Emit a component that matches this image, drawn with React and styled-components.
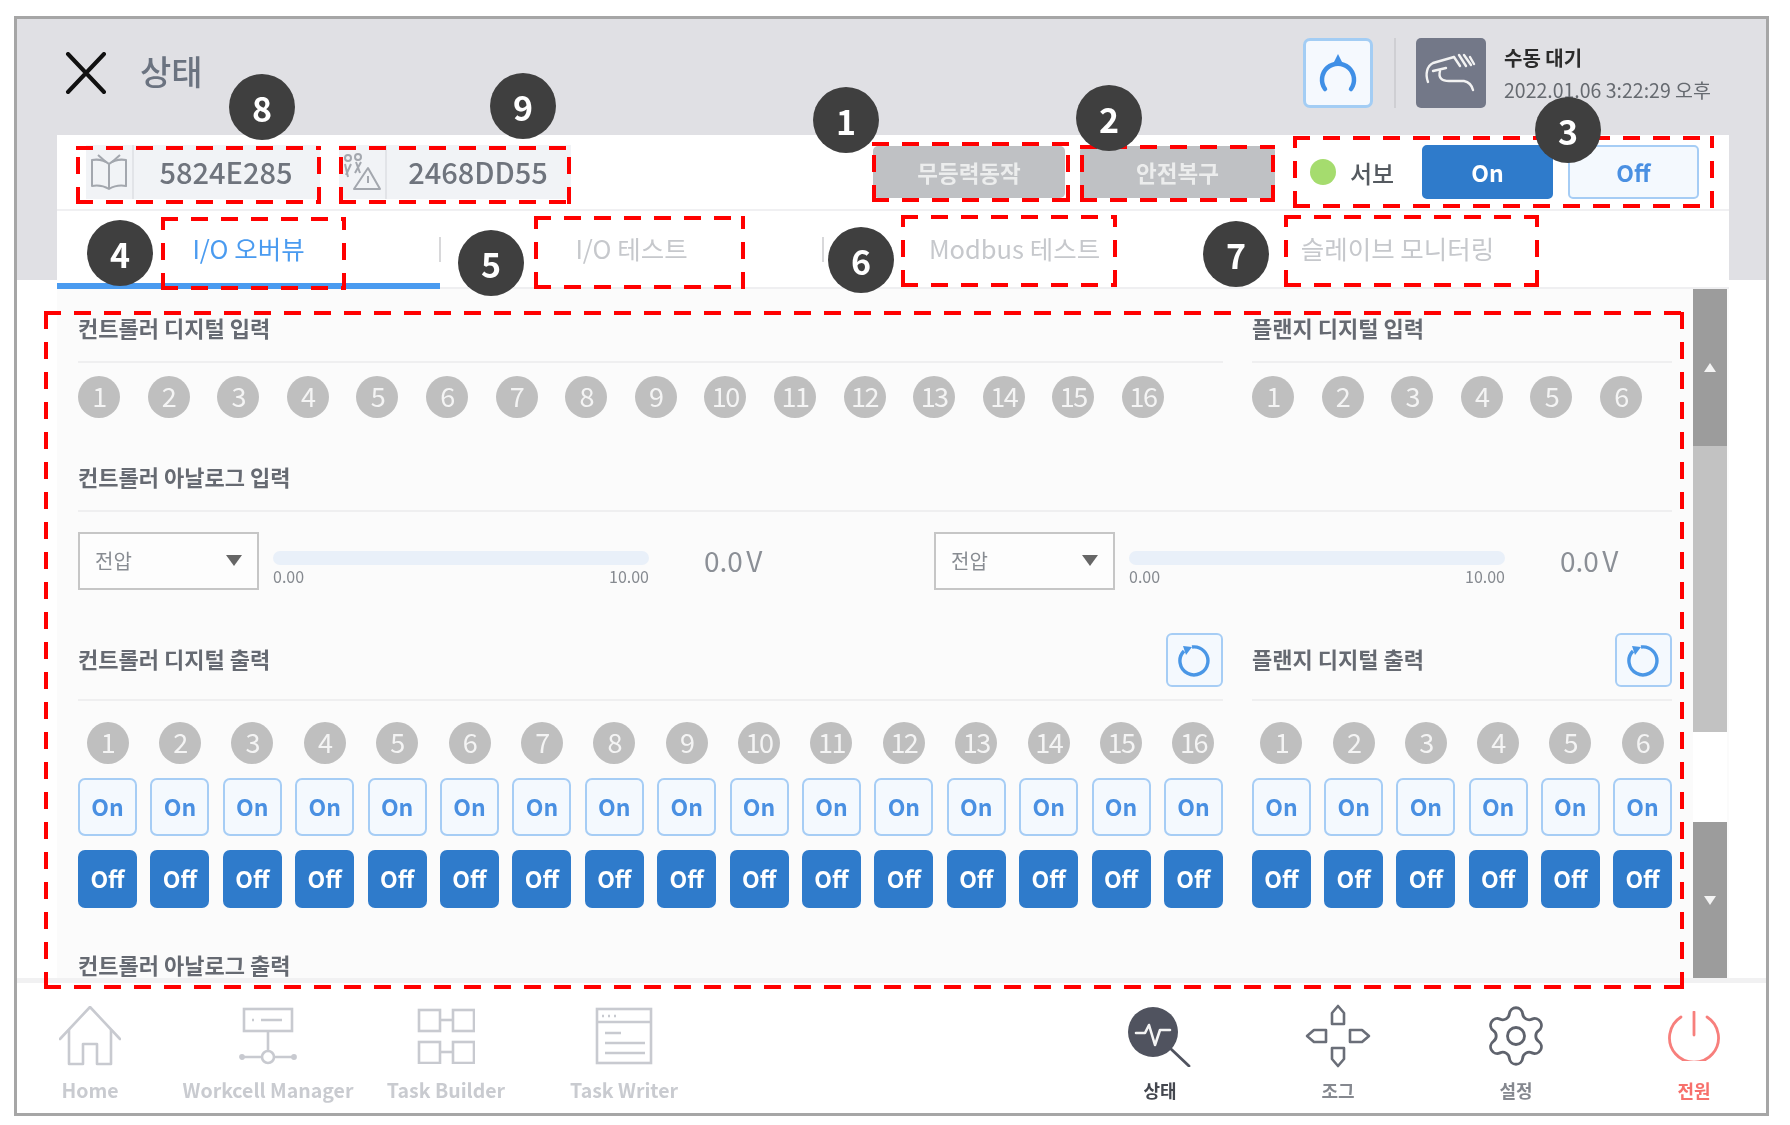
import React from "react";
import styled, { createGlobalStyle } from "styled-components";
import { Settings } from "lucide-react";

const GlobalStyle = createGlobalStyle`
  html, body { margin: 0; padding: 0; background: #fff; }
  body { font-family: "Noto Sans CJK KR", "Noto Sans", sans-serif; }
`;

const Page = styled.div`
  position: relative;
  width: 1790px;
  height: 1125px;
  box-sizing: border-box;
  padding: 16px 0 0 14px;
  overflow: hidden;
  filter: blur(0.7px);
`;

const Frame = styled.div`
  width: 1755px;
  height: 1100px;
  box-sizing: border-box;
  border: 3px solid #a6a6a6;
  display: flex;
  flex-direction: column;
  overflow: hidden;
  background: linear-gradient(#e0e0e4 0 261px, #fff 261px);
`;

/* header */
const TopBar = styled.header`
  height: 116px;
  flex: none;
  box-sizing: border-box;
  padding: 19px 52px 0 48px;
  display: flex;
  align-items: flex-start;
`;

const TopLeft = styled.div`
  height: 70px;
  display: flex;
  align-items: center;
  gap: 33px;
`;

const PageTitle = styled.h1`
  margin: 0 0 6px;
  font-size: 34px;
  font-weight: 500;
  color: #6b7380;
`;

const TopRight = styled.div`
  margin-left: auto;
  height: 70px;
  display: flex;
  align-items: center;
`;

const HomeButton = styled.div`
  width: 70px;
  height: 70px;
  box-sizing: border-box;
  border: 3px solid #a3cdf4;
  border-radius: 7px;
  background: #f5f9fe;
  display: flex;
  align-items: center;
  justify-content: center;
`;

const VLine = styled.div`
  width: 2px;
  height: 70px;
  margin: 0 20px 0 21px;
  background: #cfcfd3;
`;

const ModeIcon = styled.div`
  width: 70px;
  height: 70px;
  border-radius: 5px;
  background: #737888;
  display: flex;
  align-items: center;
  justify-content: center;
`;

const Status = styled.div`
  width: 210px;
  margin-left: 18px;
  padding-top: 2px;
  display: flex;
  flex-direction: column;
  gap: 8px;
`;

const StatusMode = styled.div`
  font-size: 20px;
  line-height: 24px;
  font-weight: 700;
  color: #2b2b2b;
`;

const StatusTime = styled.div`
  font-size: 19.5px;
  line-height: 24px;
  color: #666a70;
  white-space: nowrap;
`;

/* panel */
const Panel = styled.main`
  height: 843px;
  flex: none;
  margin: 0 37px 0 40px;
  background: #fff;
  display: flex;
  flex-direction: column;
`;

const Toolbar = styled.div`
  height: 76px;
  flex: none;
  box-sizing: border-box;
  padding: 0 28px 0 29px;
  border-bottom: 2px solid #f0f0f2;
  display: flex;
  align-items: center;
`;

const Chip = styled.div`
  width: ${(p) => p.$w}px;
  height: 54px;
  margin-right: 19px;
  background: #f1f3f6;
  display: flex;
  align-items: stretch;
`;

const ChipIcon = styled.div`
  width: 46px;
  flex: none;
  border-right: 2px solid #e2e4e8;
  display: flex;
  align-items: center;
  justify-content: center;
`;

const ChipText = styled.div`
  flex: 1;
  display: flex;
  align-items: center;
  justify-content: center;
  padding: 0 2px 2px 0;
  font-size: 29px;
  font-weight: 500;
  color: #6f747d;
`;

const GreyButton = styled.div`
  width: ${(p) => p.$w}px;
  height: 52px;
  margin-left: ${(p) => p.$ml}px;
  border-radius: 5px;
  background: #bfc1c4;
  color: #eceded;
  font-size: 22.5px;
  font-weight: 700;
  display: flex;
  align-items: center;
  justify-content: center;
`;

const ServoDot = styled.div`
  width: 26px;
  height: 26px;
  margin-left: 35px;
  border-radius: 50%;
  background: #a5dc6e;
`;

const ServoLabel = styled.div`
  width: 46px;
  margin: 0 26px 0 14px;
  font-size: 24px;
  font-weight: 500;
  color: #555a60;
  white-space: nowrap;
`;

const ServoButton = styled.div`
  width: 131px;
  height: 54px;
  margin-left: ${(p) => p.$ml}px;
  box-sizing: border-box;
  border-radius: 5px;
  border: 2px solid ${(p) => (p.$on ? "#2f7bcb" : "#a6cdf5")};
  background: ${(p) => (p.$on ? "#2f7bcb" : "#f4f9fe")};
  color: ${(p) => (p.$on ? "#fff" : "#4a90e2")};
  font-size: 23px;
  font-weight: 700;
  display: flex;
  align-items: center;
  justify-content: center;
`;

const Tabs = styled.div`
  height: 78px;
  flex: none;
  box-sizing: border-box;
  border-bottom: 2px solid #efeff1;
  display: grid;
  grid-template-columns: repeat(4, 383px);
`;

const Tab = styled.div`
  position: relative;
  height: 78px;
  box-sizing: border-box;
  border-bottom: 6px solid ${(p) => (p.$active ? "#4a9bf0" : "transparent")};
  display: flex;
  align-items: center;
  justify-content: center;
  font-size: 25.5px;
  color: ${(p) => (p.$active ? "#4a9bf0" : "#c6c8cc")};

  ${(p) =>
    p.$sep &&
    `&::after {
      content: "";
      position: absolute;
      right: -1px;
      top: 26px;
      width: 2px;
      height: 25px;
      background: #d8d8da;
    }`}
`;

const Body = styled.div`
  flex: 1;
  min-height: 0;
  display: flex;
  background: #fbfbfb;
  overflow: hidden;
`;

const Content = styled.div`
  width: 1636px;
  flex: none;
  box-sizing: border-box;
  padding: 25px 21px 0;
`;

const TwoCols = styled.div`
  display: grid;
  grid-template-columns: 1145px 420px;
  column-gap: 29px;
`;

const SectionHead = styled.div`
  display: flex;
  align-items: center;
  justify-content: space-between;
  padding-bottom: ${(p) => p.$pb}px;
  border-bottom: 2px solid #efeff0;
`;

const SectionTitle = styled.h2`
  margin: -2px 0 2px;
  font-size: 22px;
  line-height: ${(p) => (p.$tight ? 20 : 30)}px;
  font-weight: 700;
  color: #666a72;
  white-space: nowrap;
`;

const CircleRow = styled.div`
  margin: 13px 0 1px;
  display: flex;
  gap: 27.6px;
`;

const Circle = styled.div`
  width: 42px;
  height: 42px;
  flex: none;
  box-sizing: border-box;
  padding-bottom: 3px;
  border-radius: 50%;
  background: #bfbfbf;
  color: #f4f4f4;
  font-size: 27px;
  letter-spacing: -1.5px;
  display: flex;
  align-items: center;
  justify-content: center;
`;

const SectionGap = styled.div`
  height: ${(p) => p.$h}px;
`;

const AnalogRow = styled.div`
  margin: 20px 0 1px;
  display: flex;
`;

const AnalogItem = styled.div`
  width: 856px;
  display: flex;
  align-items: flex-start;
  flex: none;
`;

const Select = styled.div`
  width: 181px;
  height: 58px;
  flex: none;
  box-sizing: border-box;
  border: 2px solid #c6c6c6;
  background: #fdfdfd;
  padding: 0 15px 2px;
  display: flex;
  align-items: center;
  justify-content: space-between;
  font-size: 20px;
  color: #888c92;
`;

const Caret = styled.span`
  width: 0;
  height: 0;
  border-left: 8px solid transparent;
  border-right: 8px solid transparent;
  border-top: 11px solid #666;
`;

const Slider = styled.div`
  width: 376px;
  margin: 19px 0 0 14px;
  flex: none;
`;

const Track = styled.div`
  height: 14px;
  border-radius: 7px;
  background: #e9f0f9;
`;

const SliderLabels = styled.div`
  margin-top: 1px;
  display: flex;
  justify-content: space-between;
  font-size: 16px;
  line-height: 20px;
  color: #85898f;
`;

const AnalogValue = styled.div`
  margin-left: 55px;
  font-size: 28px;
  line-height: 56px;
  word-spacing: -3px;
  color: #8b8f96;
  white-space: nowrap;
`;

const RefreshButton = styled.div`
  width: 57px;
  height: 54px;
  box-sizing: border-box;
  border: 2px solid #a6cdf5;
  border-radius: 6px;
  background: #f4f9fe;
  display: flex;
  align-items: center;
  justify-content: center;
`;

const OutputGrid = styled.div`
  margin-top: 21px;
  display: grid;
  grid-template-columns: repeat(${(p) => p.$n}, 1fr);
  column-gap: 13.3px;
  row-gap: 14px;
  justify-items: center;
`;

const IoButton = styled.div`
  width: 100%;
  height: 58px;
  box-sizing: border-box;
  padding-bottom: 2px;
  border-radius: 7px;
  border: 2px solid ${(p) => (p.$on ? "#2f7bcb" : "#a6cdf5")};
  background: ${(p) => (p.$on ? "#2f7bcb" : "#f4f9fe")};
  color: ${(p) => (p.$on ? "#fff" : "#4a90e2")};
  font-size: 23px;
  font-weight: 700;
  display: flex;
  align-items: center;
  justify-content: center;
`;

const ScrollBar = styled.div`
  width: 34px;
  flex: none;
  display: flex;
  flex-direction: column;
`;

const ScrollEnd = styled.div`
  height: ${(p) => p.$h}px;
  flex: none;
  background: #9c9c9c;
  display: flex;
  align-items: center;
  justify-content: center;

  &::after {
    content: "";
    border-left: 6px solid transparent;
    border-right: 6px solid transparent;
    ${(p) => (p.$up ? "border-bottom" : "border-top")}: 9px solid #f4f4f4;
  }
`;

const ScrollThumb = styled.div`
  height: ${(p) => p.$h}px;
  flex: none;
  background: ${(p) => p.$bg};
`;

/* footer */
const Footer = styled.footer`
  flex: 1;
  min-height: 0;
  box-sizing: border-box;
  border-top: 5px solid #f1f1f2;
  background: #fff;
  padding: 20px 2px 0 3px;
  display: flex;
  justify-content: space-between;
`;

const FooterGroup = styled.nav`
  display: flex;
  gap: 38px;
`;

const FooterItem = styled.div`
  width: 140px;
  display: flex;
  flex-direction: column;
  align-items: center;
  color: ${(p) => p.$color};
  font-size: ${(p) => (p.$latin ? 19.5 : 18)}px;
  font-weight: 700;
  white-space: nowrap;
`;

const FooterIcon = styled.div`
  height: 66px;
  display: flex;
  align-items: center;
  justify-content: center;
`;

const FooterLabel = styled.div`
  margin-top: 7px;
  line-height: 28px;
`;

/* callouts lying over the screen */
const DashBox = styled.div`
  position: absolute;
  left: ${(p) => p.$x}px;
  top: ${(p) => p.$y}px;
  width: ${(p) => p.$w}px;
  height: ${(p) => p.$h}px;
  background:
    repeating-linear-gradient(90deg, #f00 0 17px, transparent 17px 30px) left top / 100% 4px no-repeat,
    repeating-linear-gradient(90deg, #f00 0 17px, transparent 17px 30px) left bottom / 100% 4px no-repeat,
    repeating-linear-gradient(0deg, #f00 0 17px, transparent 17px 30px) left top / 4px 100% no-repeat,
    repeating-linear-gradient(0deg, #f00 0 17px, transparent 17px 30px) right top / 4px 100% no-repeat;
`;

const Badge = styled.div`
  position: absolute;
  left: ${(p) => p.$x - 33}px;
  top: ${(p) => p.$y - 33}px;
  width: 66px;
  height: 66px;
  border-radius: 50%;
  background: #3f3f3f;
  color: #fff;
  font-size: 34px;
  font-weight: 700;
  display: flex;
  align-items: center;
  justify-content: center;
`;

const dashBoxes = [
  { x: 76, y: 146, w: 245, h: 58 },
  { x: 339, y: 146, w: 232, h: 58 },
  { x: 872, y: 142, w: 198, h: 60 },
  { x: 1080, y: 145, w: 195, h: 57 },
  { x: 1293, y: 136, w: 421, h: 72 },
  { x: 161, y: 217, w: 185, h: 73 },
  { x: 534, y: 216, w: 211, h: 73 },
  { x: 901, y: 215, w: 216, h: 72 },
  { x: 1284, y: 215, w: 255, h: 72 },
  { x: 44, y: 311, w: 1640, h: 678 },
];

const badges = [
  { n: 8, x: 262, y: 107 },
  { n: 9, x: 523, y: 106 },
  { n: 1, x: 846, y: 120 },
  { n: 2, x: 1109, y: 118 },
  { n: 3, x: 1568, y: 130 },
  { n: 4, x: 120, y: 253 },
  { n: 5, x: 491, y: 263 },
  { n: 6, x: 861, y: 260 },
  { n: 7, x: 1236, y: 254 },
];

const range = (n) => Array.from({ length: n }, (_, i) => i + 1);

const CloseIcon = () => (
  <svg width="42" height="42" viewBox="0 0 42 42" fill="none" stroke="#111" strokeWidth="4" strokeLinecap="round">
    <path d="M3 2 L39 40 M39 2 L3 40" />
  </svg>
);

const ArcIcon = () => (
  <svg width="42" height="42" viewBox="0 0 42 42" fill="none">
    <path d="M8 37 A16 16 0 1 1 34 37" stroke="#3f8fe6" strokeWidth="4.5" strokeLinecap="round" />
    <path d="M21 2 L16 12 H26 Z" fill="#3f8fe6" />
  </svg>
);

const HandIcon = () => (
  <svg width="70" height="70" viewBox="0 0 70 70" fill="none" stroke="#f2f2f2" strokeWidth="2.4" strokeLinecap="round" strokeLinejoin="round">
    <path d="M12 44 C9 36 11 28 17 25 L38 19" />
    <path d="M38 19 L44 28 M43 17 L50 28 M48 17 L55 27 M54 19 L58 26" />
    <path d="M17 33 L30 30" />
    <path d="M24 33 C22 40 26 43 33 43 L48 43 C53 44 56 48 57 52" />
  </svg>
);

const BookIcon = () => (
  <svg width="38" height="36" viewBox="0 0 38 36" fill="none" stroke="#a3a7ae" strokeWidth="2" strokeLinejoin="round">
    <path d="M19 10 C14 6 8 5 2 6 V32 C8 31 14 32 19 35 C24 32 30 31 36 32 V6 C30 5 24 6 19 10 V35" />
    <path d="M8 1 L16 8 M30 1 L22 8" />
  </svg>
);

const WarnIcon = () => (
  <svg width="40" height="38" viewBox="0 0 40 38" fill="none" stroke="#a3a7ae" strokeWidth="2" strokeLinejoin="round">
    <circle cx="6" cy="5" r="3" />
    <circle cx="16" cy="4" r="3" />
    <path d="M3 11 L6 24 M9 11 L4 22 M14 9 L18 20 M19 9 L13 20" />
    <path d="M26 15 L38 36 H12 Z" />
    <path d="M26 23 V30" />
  </svg>
);

const RefreshIcon = () => (
  <svg width="34" height="34" viewBox="0 0 34 34" fill="none">
    <path d="M14 4 A14 14 0 1 1 6 8" stroke="#4a97e6" strokeWidth="3.4" />
    <path d="M5 3 L14 4 L8 12 Z" fill="#4a97e6" />
  </svg>
);

const GREY = "#c8cad0";

const HomeNav = () => (
  <svg width="62" height="60" viewBox="0 0 62 60" fill="none" stroke={GREY} strokeWidth="2.6" strokeLinejoin="round" strokeLinecap="round">
    <path d="M1 33 L31 1 L61 33" />
    <path d="M10 24 V58 H24 V38 H38 V58 H52 V24" />
  </svg>
);

const WorkcellNav = () => (
  <svg width="58" height="58" viewBox="0 0 58 58" fill="none" stroke={GREY} strokeWidth="2.6">
    <rect x="5" y="2" width="48" height="22" />
    <path d="M13 13 H15 M22 13 H43" />
    <path d="M29 24 V44" />
    <circle cx="29" cy="50" r="6" />
    <path d="M3 50 H23 M35 50 H55" />
    <circle cx="3" cy="50" r="1.6" fill={GREY} />
    <circle cx="55" cy="50" r="1.6" fill={GREY} />
  </svg>
);

const TaskBuilderNav = () => (
  <svg width="58" height="56" viewBox="0 0 58 56" fill="none" stroke={GREY} strokeWidth="2.6">
    <rect x="2" y="2" width="21" height="21" />
    <rect x="36" y="2" width="21" height="21" />
    <path d="M23 12 H36" />
    <rect x="2" y="34" width="21" height="21" />
    <rect x="36" y="34" width="21" height="21" />
    <path d="M23 44 H36" />
  </svg>
);

const TaskWriterNav = () => (
  <svg width="58" height="58" viewBox="0 0 58 58" fill="none" stroke={GREY} strokeWidth="2.6">
    <rect x="2" y="2" width="54" height="54" />
    <path d="M2 15 H56" />
    <path d="M7 9 H9 M13 9 H15 M19 9 H21" />
    <path d="M10 26 H26 M10 36 H50 M10 46 H50" />
  </svg>
);

const StatusNav = () => (
  <svg width="66" height="62" viewBox="0 0 66 62" fill="none">
    <circle cx="26" cy="27" r="25" fill="#50535f" />
    <path d="M44 44 L62 61" stroke="#50535f" strokeWidth="2.8" strokeLinecap="round" />
    <path d="M9 28 H18 L22 20 L28 40 L33 25 H43" stroke="#f4f4f4" strokeWidth="2.6" strokeLinejoin="round" strokeLinecap="round" />
  </svg>
);

const JogNav = () => (
  <svg width="66" height="64" viewBox="0 0 66 64" fill="none" stroke="#6a6e78" strokeWidth="2.6" strokeLinejoin="round">
    <path d="M27 20 V9 L33 2 L39 9 V20 Z" />
    <path d="M27 44 V55 L33 62 L39 55 V44 Z" />
    <path d="M21 26 H9 L2 32 L9 38 H21 Z" />
    <path d="M45 26 H57 L64 32 L57 38 H45 Z" />
  </svg>
);

const PowerNav = () => (
  <svg width="54" height="50" viewBox="0 0 54 50" fill="none" stroke="#f77f7c" strokeWidth="2.8" strokeLinecap="round">
    <path d="M27 1 V24" />
    <path d="M14 6 A24.5 24.5 0 1 0 40 6" />
  </svg>
);

const Circles = ({ n }) => (
  <CircleRow>
    {range(n).map((i) => (
      <Circle key={i}>{i}</Circle>
    ))}
  </CircleRow>
);

const Output = ({ n }) => (
  <OutputGrid $n={n}>
    {range(n).map((i) => (
      <Circle key={i}>{i}</Circle>
    ))}
    {range(n).map((i) => (
      <IoButton key={i}>On</IoButton>
    ))}
    {range(n).map((i) => (
      <IoButton key={i} $on>
        Off
      </IoButton>
    ))}
  </OutputGrid>
);

const Analog = () => (
  <AnalogItem>
    <Select>
      전압
      <Caret />
    </Select>
    <Slider>
      <Track />
      <SliderLabels>
        <span>0.00</span>
        <span>10.00</span>
      </SliderLabels>
    </Slider>
    <AnalogValue>0.0 V</AnalogValue>
  </AnalogItem>
);

const navLeft = [
  ["Home", HomeNav],
  ["Workcell Manager", WorkcellNav],
  ["Task Builder", TaskBuilderNav],
  ["Task Writer", TaskWriterNav],
];

const navRight = [
  ["상태", StatusNav, "#44474f"],
  ["조그", JogNav, "#85888f"],
  ["설정", null, "#85888f"],
  ["전원", PowerNav, "#f7706c"],
];

export default function App() {
  return (
    <>
      <GlobalStyle />
      <Page>
        <Frame>
          <TopBar>
            <TopLeft>
              <CloseIcon />
              <PageTitle>상태</PageTitle>
            </TopLeft>
            <TopRight>
              <HomeButton>
                <ArcIcon />
              </HomeButton>
              <VLine />
              <ModeIcon>
                <HandIcon />
              </ModeIcon>
              <Status>
                <StatusMode>수동 대기</StatusMode>
                <StatusTime>2022.01.06 3:22:29 오후</StatusTime>
              </Status>
            </TopRight>
          </TopBar>

          <Panel>
            <Toolbar>
              <Chip $w={234}>
                <ChipIcon>
                  <BookIcon />
                </ChipIcon>
                <ChipText>5824E285</ChipText>
              </Chip>
              <Chip $w={232}>
                <ChipIcon>
                  <WarnIcon />
                </ChipIcon>
                <ChipText>2468DD55</ChipText>
              </Chip>
              <GreyButton $w={192} $ml={283}>
                무등력동작
              </GreyButton>
              <GreyButton $w={195} $ml={15}>
                안전복구
              </GreyButton>
              <ServoDot />
              <ServoLabel>서보</ServoLabel>
              <ServoButton $on $ml={0}>
                On
              </ServoButton>
              <ServoButton $ml={15}>Off</ServoButton>
            </Toolbar>

            <Tabs>
              <Tab $active $sep>
                I/O 오버뷰
              </Tab>
              <Tab $sep>I/O 테스트</Tab>
              <Tab>Modbus 테스트</Tab>
              <Tab>슬레이브 모니터링</Tab>
            </Tabs>

            <Body>
              <Content>
                <TwoCols>
                  <div>
                    <SectionHead $pb={17}>
                      <SectionTitle>컨트롤러 디지털 입력</SectionTitle>
                    </SectionHead>
                    <Circles n={16} />
                  </div>
                  <div>
                    <SectionHead $pb={17}>
                      <SectionTitle>플랜지 디지털 입력</SectionTitle>
                    </SectionHead>
                    <Circles n={6} />
                  </div>
                </TwoCols>

                <SectionGap $h={44} />
                <SectionHead $pb={17}>
                  <SectionTitle>컨트롤러 아날로그 입력</SectionTitle>
                </SectionHead>
                <AnalogRow>
                  <Analog />
                  <Analog />
                </AnalogRow>

                <SectionGap $h={42} />
                <TwoCols>
                  <div>
                    <SectionHead $pb={12}>
                      <SectionTitle>컨트롤러 디지털 출력</SectionTitle>
                      <RefreshButton>
                        <RefreshIcon />
                      </RefreshButton>
                    </SectionHead>
                    <Output n={16} />
                  </div>
                  <div>
                    <SectionHead $pb={12}>
                      <SectionTitle>플랜지 디지털 출력</SectionTitle>
                      <RefreshButton>
                        <RefreshIcon />
                      </RefreshButton>
                    </SectionHead>
                    <Output n={6} />
                  </div>
                </TwoCols>

                <SectionGap $h={48} />
                <SectionTitle $tight>컨트롤러 아날로그 출력</SectionTitle>
              </Content>
              <ScrollBar>
                <ScrollEnd $up $h={157} />
                <ScrollThumb $h={286} $bg="#c2c2c2" />
                <ScrollThumb $h={90} $bg="#fff" />
                <ScrollEnd $h={156} />
              </ScrollBar>
            </Body>
          </Panel>

          <Footer>
            <FooterGroup>
              {navLeft.map(([label, Icon]) => (
                <FooterItem key={label} $color="#c9cbd0" $latin>
                  <FooterIcon>
                    <Icon />
                  </FooterIcon>
                  <FooterLabel>{label}</FooterLabel>
                </FooterItem>
              ))}
            </FooterGroup>
            <FooterGroup>
              {navRight.map(([label, Icon, color]) => (
                <FooterItem key={label} $color={color}>
                  <FooterIcon>
                    {Icon ? <Icon /> : <Settings size={68} strokeWidth={1} color="#5f636d" />}
                  </FooterIcon>
                  <FooterLabel>{label}</FooterLabel>
                </FooterItem>
              ))}
            </FooterGroup>
          </Footer>
        </Frame>

        {dashBoxes.map((b) => (
          <DashBox key={`${b.x}-${b.y}`} $x={b.x} $y={b.y} $w={b.w} $h={b.h} />
        ))}
        {badges.map((b) => (
          <Badge key={b.n} $x={b.x} $y={b.y}>
            {b.n}
          </Badge>
        ))}
      </Page>
    </>
  );
}
